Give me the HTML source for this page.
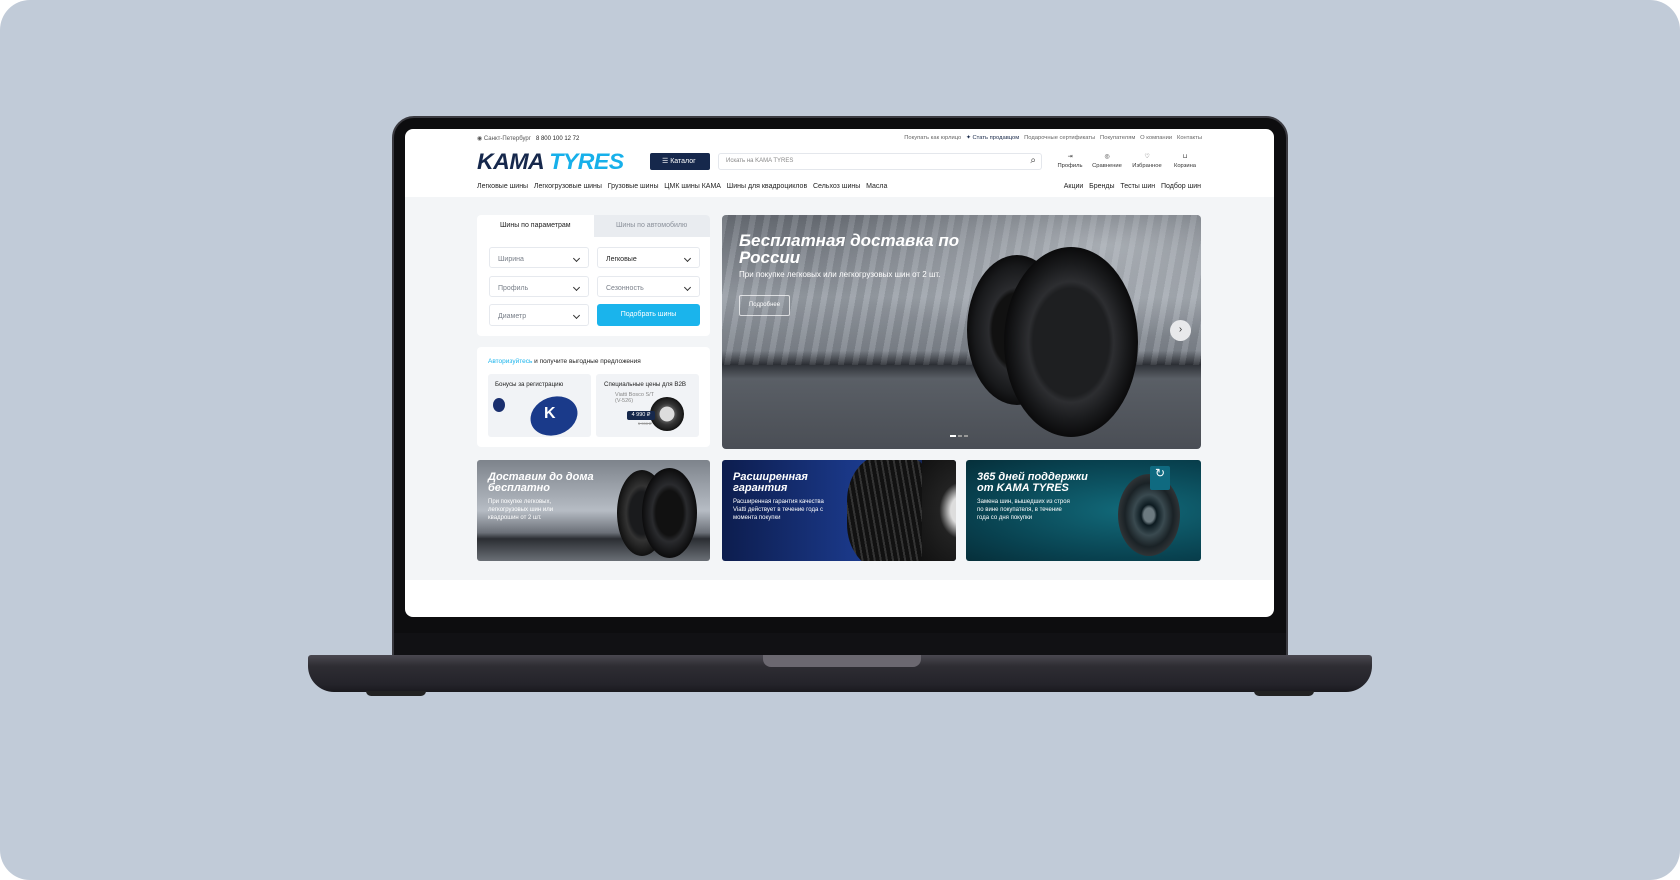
<!DOCTYPE html>
<html><head><meta charset="utf-8"><style>
*{margin:0;padding:0;box-sizing:border-box}
body{width:1680px;height:880px;background:#fff;font-family:"Liberation Sans",sans-serif;position:relative;overflow:hidden}
.a{position:absolute}
.t{position:absolute;white-space:nowrap}
.sel{position:absolute;background:#fff;border:1px solid #e6e9ee;border-radius:3px;font-size:7px;color:#7a808a;padding:8px 0 0 8px}
.sel:after{content:"";position:absolute;right:9px;top:8px;width:4px;height:4px;border-right:1.2px solid #333;border-bottom:1.2px solid #333;transform:rotate(45deg)}
.ic{display:inline-block;text-align:center}
</style></head><body>
<div class="a" style="left:0;top:0;width:1680px;height:880px;background:#c1cbd8;border-radius:30px"></div>
<!-- laptop bezel -->
<div class="a" style="left:392px;top:116px;width:896px;height:540px;background:#0d0d0f;border-radius:22px 22px 0 0;border:2px solid #3a3a40"></div>
<div class="a" style="left:405px;top:129px;width:869px;height:488px;background:#fff;border-radius:8px;overflow:hidden">
 <div class="t" style="left:72px;top:6px;font-size:6px;color:#555">◉ Санкт-Петербург &nbsp;&nbsp;<span style="color:#222">8 800 100 12 72</span></div>
 <div class="t" style="right:72px;top:6px;font-size:5.8px;color:#666">Покупать как юрлицо &nbsp; <span style="color:#1a2a4a">✦ Стать продавцом</span> &nbsp; Подарочные сертификаты &nbsp; Покупателям &nbsp; О компании &nbsp; Контакты</div>
 <div class="t" style="left:72px;top:20px;font-size:22px;font-weight:bold;font-style:italic;letter-spacing:-0.5px;color:#16284c;transform:scaleX(1.05);transform-origin:left">KAMA<span style="color:#17b0ea"> TYRES</span></div>
 <div class="a" style="left:245px;top:24px;width:60px;height:17px;background:#16284c;border-radius:2px;color:#fff;font-size:7px;padding:4px 0 0 12px">☰ Каталог</div>
 <div class="a" style="left:313px;top:24px;width:324px;height:17px;border:1px solid #e4e7ec;border-radius:3px;font-size:6px;color:#888;padding:4px 0 0 7px">Искать на KAMA TYRES<span style="position:absolute;right:5px;top:1px;font-size:10px;color:#333">⌕</span></div>
 <div class="t" style="left:648px;top:24px;font-size:5.8px;color:#333;line-height:9px">
  <span class="ic" style="width:34px">⇥<br>Профиль</span><span class="ic" style="width:40px">◎<br>Сравнение</span><span class="ic" style="width:40px">♡<br>Избранное</span><span class="ic" style="width:36px">⊔<br>Корзина</span></div>
 <div class="t" style="left:72px;top:54px;font-size:7px;color:#222">Легковые шины &nbsp; Легкогрузовые шины &nbsp; Грузовые шины &nbsp; ЦМК шины КАМА &nbsp; Шины для квадроциклов &nbsp; Сельхоз шины &nbsp; Масла</div>
 <div class="t" style="right:73px;top:54px;font-size:7px;color:#222">Акции &nbsp; Бренды &nbsp; Тесты шин &nbsp; Подбор шин</div>
 <div class="a" style="left:0;top:68px;width:869px;height:383px;background:#f3f5f7"></div>
 <div class="a" style="left:72px;top:86px;width:233px;height:121px;background:#fff;border-radius:4px;overflow:hidden">
  <div class="a" style="left:117px;top:0;width:116px;height:22px;background:#e9ecf0"></div>
  <div class="t" style="left:23px;top:7px;font-size:7px;color:#222">Шины по параметрам</div>
  <div class="t" style="left:139px;top:7px;font-size:7px;color:#8a909a">Шины по автомобилю</div>
 </div>
 <div class="sel" style="left:84px;top:118px;width:100px;height:21px">Ширина</div>
 <div class="sel" style="left:192px;top:118px;width:103px;height:21px;color:#222">Легковые</div>
 <div class="sel" style="left:84px;top:147px;width:100px;height:21px">Профиль</div>
 <div class="sel" style="left:192px;top:147px;width:103px;height:21px">Сезонность</div>
 <div class="sel" style="left:84px;top:175px;width:100px;height:22px">Диаметр</div>
 <div class="a" style="left:192px;top:175px;width:103px;height:22px;background:#1ab4ec;border-radius:3px;color:#fff;font-size:7px;text-align:center;padding-top:7px">Подобрать шины</div>
 <div class="a" style="left:72px;top:218px;width:233px;height:100px;background:#fff;border-radius:4px"></div>
 <div class="t" style="left:83px;top:229px;font-size:6.5px;color:#222"><span style="color:#1ab4ec">Авторизуйтесь</span> и получите выгодные предложения</div>
 <div class="a" style="left:83px;top:245px;width:103px;height:63px;background:#f1f3f6;border-radius:3px"></div>
 <div class="t" style="left:90px;top:252px;font-size:6.2px;color:#222">Бонусы за регистрацию</div>
 <div class="a" style="left:125px;top:268px;width:48px;height:38px;background:#1a3a8a;border-radius:50%;transform:rotate(-20deg)"></div>
 <div class="t" style="left:139px;top:276px;font-size:16px;color:#fff;font-weight:bold">K</div>
 <div class="a" style="left:88px;top:269px;width:12px;height:14px;background:#1a2f6e;border-radius:50%"></div>
 <div class="a" style="left:191px;top:245px;width:103px;height:63px;background:#f1f3f6;border-radius:3px"></div>
 <div class="t" style="left:199px;top:252px;font-size:6.2px;color:#222">Специальные цены для B2B</div>
 <div class="t" style="left:210px;top:263px;font-size:5.5px;color:#888">Viatti Bosco S/T<br>(V-526)</div>
 <div class="a" style="left:245px;top:268px;width:34px;height:34px;border-radius:50%;background:radial-gradient(circle,#ddd 0 30%,#555 32%,#333 45%,#222 60%,#111 70%)"></div>
 <div class="a" style="left:222px;top:282px;width:28px;height:9px;background:#16284c;border-radius:2px;color:#fff;font-size:5.5px;text-align:center;padding-top:1px">4 990 ₽</div>
 <div class="t" style="left:233px;top:292px;font-size:4px;color:#999;text-decoration:line-through">5 990 ₽</div>
 <div class="a" style="left:317px;top:86px;width:479px;height:234px;border-radius:4px;overflow:hidden;background:linear-gradient(180deg,#6b7078 0%,#9aa0a8 35%,#80868e 58%,#2f3238 64%,#5a5f66 70%,#4a4e55 100%)">
  <div class="a" style="left:0;top:0;width:479px;height:150px;background:radial-gradient(ellipse at 80% 20%,rgba(220,225,230,.5),transparent 55%),repeating-linear-gradient(100deg,rgba(255,255,255,.08) 0 6px,rgba(0,0,0,.08) 6px 14px)"></div>
  <div class="a" style="left:245px;top:40px;width:100px;height:150px;border-radius:50%;background:radial-gradient(ellipse,#111 0 35%,#2a2b2e 40%,#18191b 60%,#0c0c0d 70%)"></div>
  <div class="a" style="left:282px;top:32px;width:134px;height:190px;border-radius:50%;background:radial-gradient(ellipse,#1e1f21 0 40%,#2d2e31 45%,#1a1b1d 58%,#0b0b0c 70%)"></div>
  <div class="t" style="left:17px;top:17px;font-size:17px;font-weight:bold;font-style:italic;color:#fff;line-height:17px">Бесплатная доставка по<br>России</div>
  <div class="t" style="left:17px;top:55px;font-size:8px;color:#fff">При покупке легковых или легкогрузовых шин от 2 шт.</div>
  <div class="a" style="left:17px;top:80px;width:51px;height:21px;border:1px solid rgba(255,255,255,.7);border-radius:2px;color:#fff;font-size:6px;text-align:center;padding-top:6px">Подробнее</div>
  <div class="a" style="left:448px;top:105px;width:21px;height:21px;border-radius:50%;background:#e8e9eb;color:#333;font-size:10px;text-align:center;line-height:20px">›</div>
  <div class="a" style="left:228px;top:220px;width:6px;height:2px;background:#fff"></div>
  <div class="a" style="left:236px;top:220px;width:4px;height:2px;background:#999"></div>
  <div class="a" style="left:242px;top:220px;width:4px;height:2px;background:#999"></div>
 </div>
 <div class="a" style="left:72px;top:331px;width:233px;height:101px;border-radius:3px;overflow:hidden;background:linear-gradient(180deg,#7d838b,#b6bcc4 50%,#6b7078 72%,#2b2e33 78%,#6a6f76)">
  <div class="a" style="left:140px;top:10px;width:50px;height:86px;border-radius:50%;background:radial-gradient(ellipse,#1a1b1d 35%,#333 45%,#111 70%)"></div>
  <div class="a" style="left:165px;top:8px;width:55px;height:90px;border-radius:50%;background:radial-gradient(ellipse,#111 35%,#2a2b2e 45%,#0c0c0d 70%)"></div>
  <div class="t" style="left:11px;top:12px;font-size:11px;font-weight:bold;font-style:italic;color:#fff;line-height:11px">Доставим до дома<br>бесплатно</div>
  <div class="t" style="left:11px;top:38px;font-size:6px;color:#fff;line-height:8px">При покупке легковых,<br>легкогрузовых шин или<br>квадрошин от 2 шт.</div>
 </div>
 <div class="a" style="left:317px;top:331px;width:234px;height:101px;border-radius:3px;overflow:hidden;background:linear-gradient(90deg,#0d1d4e,#1b3a8c 60%,#0f1a3a)">
  <div class="a" style="left:125px;top:-5px;width:90px;height:115px;border-radius:40%;background:repeating-linear-gradient(80deg,#111 0 4px,#333 4px 6px)"></div>
  <div class="a" style="left:200px;top:0;width:40px;height:101px;background:radial-gradient(ellipse at 100% 50%,#ddd 0 20%,#222 40%,#111)"></div>
  <div class="t" style="left:11px;top:12px;font-size:11px;font-weight:bold;font-style:italic;color:#fff;line-height:11px">Расширенная<br>гарантия</div>
  <div class="t" style="left:11px;top:38px;font-size:6px;color:#fff;line-height:8px">Расширенная гарантия качества<br>Viatti действует в течение года с<br>момента покупки</div>
 </div>
 <div class="a" style="left:561px;top:331px;width:235px;height:101px;border-radius:3px;overflow:hidden;background:radial-gradient(ellipse at 70% 50%,#126a7a,#08404e 70%,#062f3a)">
  <div class="a" style="left:152px;top:14px;width:62px;height:82px;border-radius:50%;background:radial-gradient(ellipse,#6c7a80 0 12%,#0c1a20 18%,#3a4a50 35%,#1a2226 55%,#2e3336 70%)"></div>
  <div class="a" style="left:184px;top:6px;width:20px;height:24px;background:#0f6a80;border-radius:2px;color:#fff;text-align:center;font-size:12px">↻</div>
  <div class="t" style="left:11px;top:12px;font-size:11px;font-weight:bold;font-style:italic;color:#fff;line-height:11px">365 дней поддержки<br>от KAMA TYRES</div>
  <div class="t" style="left:11px;top:38px;font-size:6px;color:#fff;line-height:8px">Замена шин, вышедших из строя<br>по вине покупателя, в течение<br>года со дня покупки</div>
 </div>
</div>
<div class="a" style="left:394px;top:633px;width:892px;height:22px;background:#111114"></div>
<div class="a" style="left:308px;top:655px;width:1064px;height:37px;background:linear-gradient(180deg,#4a4850,#2e2d33 30%,#24232a 80%,#1a191e);border-radius:3px 3px 26px 26px"></div>
<div class="a" style="left:763px;top:655px;width:158px;height:12px;background:#6b6870;border-radius:0 0 8px 8px"></div>
<div class="a" style="left:366px;top:691px;width:60px;height:5px;background:#222;border-radius:0 0 6px 6px"></div>
<div class="a" style="left:1254px;top:691px;width:60px;height:5px;background:#222;border-radius:0 0 6px 6px"></div>
</body></html>
